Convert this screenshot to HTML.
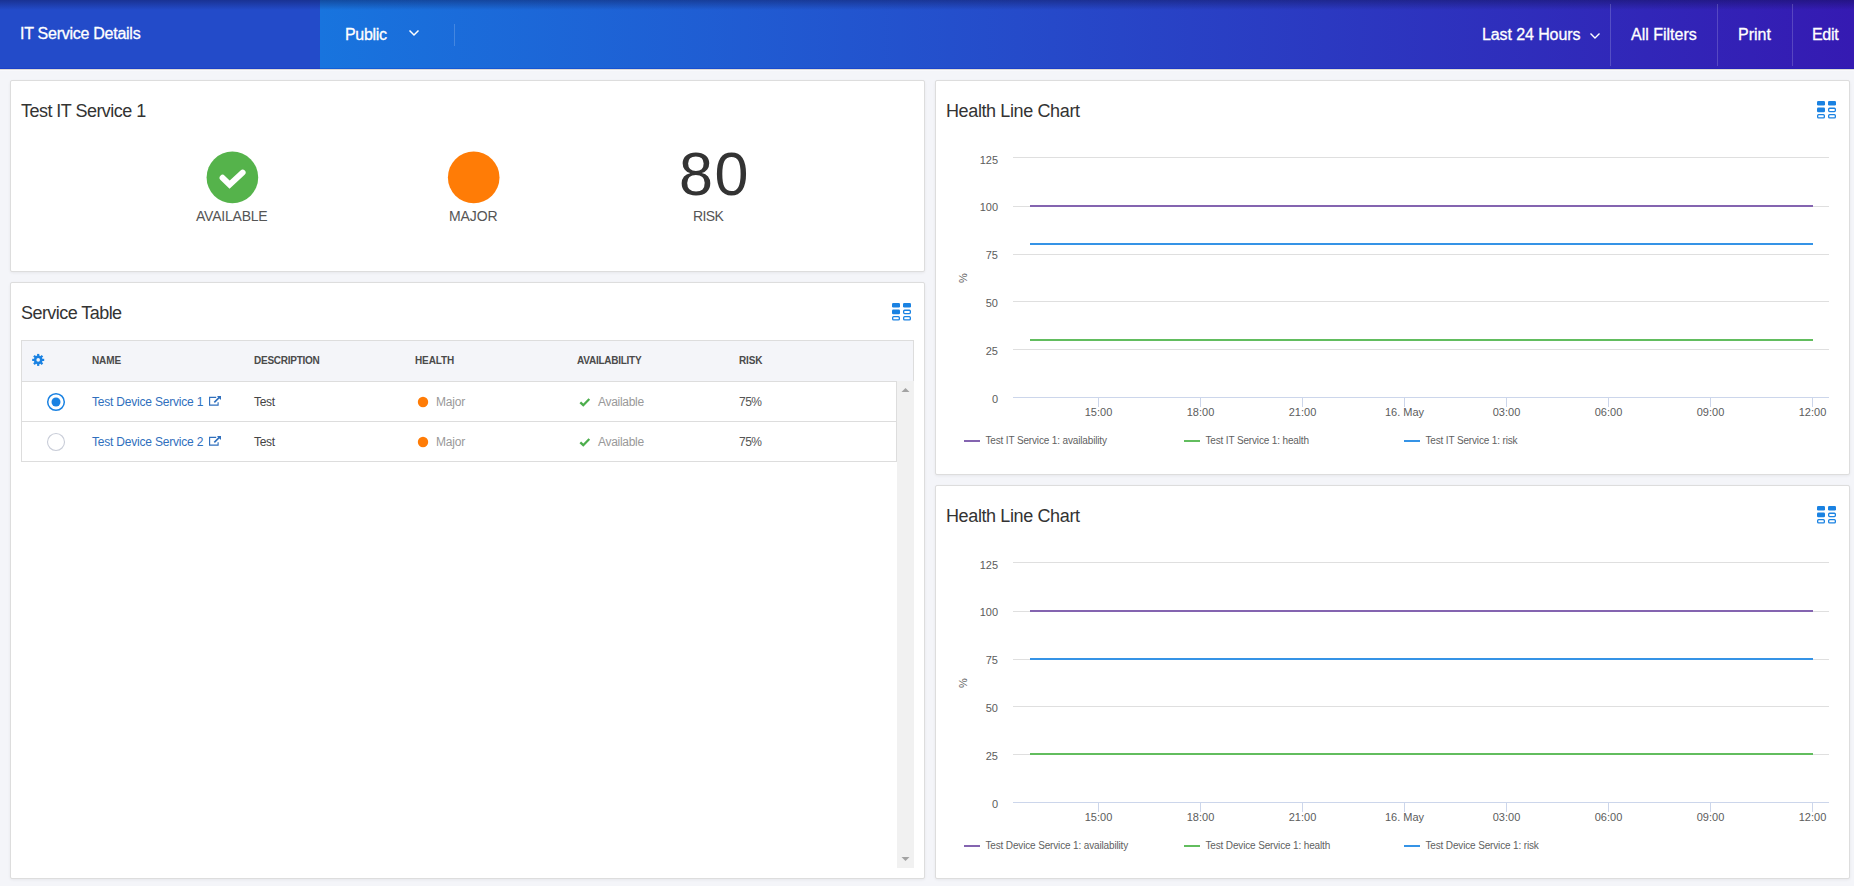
<!DOCTYPE html>
<html>
<head>
<meta charset="utf-8">
<style>
*{box-sizing:border-box;margin:0;padding:0}
html,body{width:1854px;height:886px;overflow:hidden;background:#f4f5f9;font-family:"Liberation Sans",sans-serif;position:relative}
.a{position:absolute;white-space:nowrap}
#hdrL{position:absolute;left:0;top:0;width:320px;height:69px;background:#234bc9}
#hdrR{position:absolute;left:320px;top:0;width:1534px;height:69px;background:linear-gradient(90deg,#1874de,#351ab2)}
#hdrShade{position:absolute;left:0;top:0;width:1854px;height:10px;background:linear-gradient(180deg,rgba(10,10,60,.38),rgba(10,10,60,0))}
.sep{position:absolute;top:4px;width:1px;height:62px;background:rgba(255,255,255,.18)}
.card{position:absolute;background:#fff;border:1px solid #dddddd;border-radius:2px;box-shadow:0 1px 3px rgba(0,0,0,.06)}
</style>
</head>
<body>
<div id="hdrL"></div>
<div id="hdrR"></div>
<div id="hdrShade"></div>
<div class="a" style="left:0;top:68px;width:1854px;height:1px;background:rgba(0,30,200,.25)"></div>
<div class="a" style="left:0;top:69px;width:1854px;height:1px;background:#dcd9d6"></div>
<div class="a" style="left:0;top:70px;width:1854px;height:1px;background:#f9f9fc"></div>
<div class="a" style="left:20px;top:26px;font-size:16px;line-height:16px;color:#fff;letter-spacing:-0.26px;font-weight:normal;-webkit-text-stroke:0.3px #fff">IT Service Details</div>
<div class="a" style="left:345px;top:27px;font-size:16px;line-height:16px;color:#fff;letter-spacing:-0.3px;font-weight:normal;-webkit-text-stroke:0.3px #fff">Public</div>
<svg class="a" style="left:407px;top:28px" width="14" height="10" viewBox="0 0 14 10"><path d="M2.5 2.5 L7 7 L11.5 2.5" fill="none" stroke="#fff" stroke-width="1.5"/></svg>
<div class="sep" style="left:454px;top:24px;height:22px"></div>
<div class="a" style="left:1482px;top:27px;font-size:16px;line-height:16px;color:#fff;letter-spacing:-0.1px;font-weight:normal;-webkit-text-stroke:0.3px #fff">Last 24 Hours</div>
<svg class="a" style="left:1588px;top:31px" width="14" height="10" viewBox="0 0 14 10"><path d="M2.5 2.5 L7 7 L11.5 2.5" fill="none" stroke="#fff" stroke-width="1.4"/></svg>
<div class="sep" style="left:1610px"></div>
<div class="a" style="left:1631px;top:27px;font-size:16px;line-height:16px;color:#fff;letter-spacing:0px;font-weight:normal;-webkit-text-stroke:0.3px #fff">All Filters</div>
<div class="sep" style="left:1717px"></div>
<div class="a" style="left:1738px;top:27px;font-size:16px;line-height:16px;color:#fff;letter-spacing:0px;font-weight:normal;-webkit-text-stroke:0.3px #fff">Print</div>
<div class="sep" style="left:1792px"></div>
<div class="a" style="left:1812px;top:27px;font-size:16px;line-height:16px;color:#fff;letter-spacing:-0.3px;font-weight:normal;-webkit-text-stroke:0.3px #fff">Edit</div>
<div class="card" style="left:10px;top:80px;width:915px;height:192px"></div>
<div class="a" style="left:21px;top:102px;font-size:18px;line-height:18px;color:#333;letter-spacing:-0.53px;font-weight:normal;">Test IT Service 1</div>
<svg class="a" style="left:206px;top:151px" width="53" height="53" viewBox="0 0 53 53"><circle cx="26.4" cy="26.4" r="25.8" fill="#55b34b"/><path d="M16.6 26.8 L23.6 33.6 L36.6 21.6" fill="none" stroke="#fff" stroke-width="6" stroke-linecap="round" stroke-linejoin="miter"/></svg>
<svg class="a" style="left:447px;top:151px" width="53" height="53" viewBox="0 0 53 53"><circle cx="26.7" cy="26.4" r="25.8" fill="#ff7c06"/></svg>
<div class="a" style="left:196px;top:209px;font-size:14px;line-height:14px;color:#555;letter-spacing:-0.22px;font-weight:normal;">AVAILABLE</div>
<div class="a" style="left:449px;top:209px;font-size:14px;line-height:14px;color:#555;letter-spacing:-0.1px;font-weight:normal;">MAJOR</div>
<div class="a" style="left:693px;top:209px;font-size:14px;line-height:14px;color:#555;letter-spacing:-0.6px;font-weight:normal;">RISK</div>
<div class="a" style="left:679px;top:144px;font-size:61px;line-height:61px;color:#333;letter-spacing:1.5px;font-weight:normal;">80</div>
<div class="card" style="left:10px;top:282px;width:915px;height:597px"></div>
<div class="a" style="left:21px;top:304px;font-size:18px;line-height:18px;color:#333;letter-spacing:-0.55px;font-weight:normal;">Service Table</div>
<svg class="a" style="left:891px;top:302px" width="21" height="20" viewBox="0 0 21 20">
 <g fill="#1a82e2"><rect x="1" y="1" width="8" height="4.6" rx="1.3"/><rect x="12" y="1" width="8" height="4.6" rx="1.3"/><rect x="1" y="7.6" width="8" height="4.6" rx="1.3"/></g>
 <g fill="none" stroke="#1a82e2" stroke-width="1.3"><rect x="12.65" y="8.25" width="6.7" height="3.3" rx="1"/><rect x="1.65" y="14.65" width="6.7" height="3.3" rx="1"/><rect x="12.65" y="14.65" width="6.7" height="3.3" rx="1"/></g>
</svg>
<div class="a" style="left:21px;top:340px;width:893px;height:41px;background:#f4f5f9;border:1px solid #dddddd;border-bottom:none"></div>
<div class="a" style="left:21px;top:381px;width:876px;height:81px;border:1px solid #dddddd"></div>
<div class="a" style="left:22px;top:421px;width:874px;height:1px;background:#dddddd"></div>
<div class="a" style="left:897px;top:381px;width:17px;height:487px;background:#f1f1f1"></div>
<svg class="a" style="left:900px;top:386px" width="11" height="8" viewBox="0 0 11 8"><path d="M1.5 6 L5.5 2 L9.5 6 Z" fill="#a3a3a3"/></svg>
<svg class="a" style="left:900px;top:855px" width="11" height="8" viewBox="0 0 11 8"><path d="M1.5 2 L5.5 6 L9.5 2 Z" fill="#a3a3a3"/></svg>
<svg class="a" style="left:31px;top:353px" width="14" height="14" viewBox="0 0 14 14"><g transform="translate(7.2 6.9)" fill="#1a82e2"><circle r="4.3"/><rect x="-1.1" y="-6" width="2.2" height="3" transform="rotate(0)"/><rect x="-1.1" y="-6" width="2.2" height="3" transform="rotate(45)"/><rect x="-1.1" y="-6" width="2.2" height="3" transform="rotate(90)"/><rect x="-1.1" y="-6" width="2.2" height="3" transform="rotate(135)"/><rect x="-1.1" y="-6" width="2.2" height="3" transform="rotate(180)"/><rect x="-1.1" y="-6" width="2.2" height="3" transform="rotate(225)"/><rect x="-1.1" y="-6" width="2.2" height="3" transform="rotate(270)"/><rect x="-1.1" y="-6" width="2.2" height="3" transform="rotate(315)"/><circle r="1.8" fill="#f4f5f9"/></g></svg>
<div class="a" style="left:92px;top:356px;font-size:10px;line-height:10px;color:#4a4a4a;letter-spacing:-0.1px;font-weight:bold;">NAME</div>
<div class="a" style="left:254px;top:356px;font-size:10px;line-height:10px;color:#4a4a4a;letter-spacing:-0.25px;font-weight:bold;">DESCRIPTION</div>
<div class="a" style="left:415px;top:356px;font-size:10px;line-height:10px;color:#4a4a4a;letter-spacing:-0.1px;font-weight:bold;">HEALTH</div>
<div class="a" style="left:577px;top:356px;font-size:10px;line-height:10px;color:#4a4a4a;letter-spacing:-0.25px;font-weight:bold;">AVAILABILITY</div>
<div class="a" style="left:739px;top:356px;font-size:10px;line-height:10px;color:#4a4a4a;letter-spacing:-0.1px;font-weight:bold;">RISK</div>
<svg class="a" style="left:46px;top:392px" width="20" height="20" viewBox="0 0 20 20"><circle cx="10" cy="10" r="8.3" fill="#fff" stroke="#1a82e2" stroke-width="1.5"/><circle cx="10" cy="10" r="4.5" fill="#1a82e2"/></svg>
<div class="a" style="left:92px;top:396px;font-size:12px;line-height:12px;color:#2f6fbd;letter-spacing:-0.2px;font-weight:normal;">Test Device Service 1</div>
<svg class="a" style="left:208px;top:390px" width="16" height="18" viewBox="0 0 16 18"><path d="M8.2 7.3 H1.6 V15.1 H10.1 V12.3" fill="none" stroke="#2f6fbd" stroke-width="1.15"/><path d="M6.3 12.4 L11.6 7.1" fill="none" stroke="#2f6fbd" stroke-width="1.6"/><path d="M8.9 6 H13 V10.1 Z" fill="#2f6fbd"/></svg>
<div class="a" style="left:254px;top:396px;font-size:12px;line-height:12px;color:#444;letter-spacing:-0.3px;font-weight:normal;">Test</div>
<svg class="a" style="left:417px;top:396px" width="12" height="12" viewBox="0 0 12 12"><circle cx="6" cy="6" r="5.2" fill="#ff7c06"/></svg>
<div class="a" style="left:436px;top:396px;font-size:12px;line-height:12px;color:#999;letter-spacing:-0.2px;font-weight:normal;">Major</div>
<svg class="a" style="left:578px;top:396px" width="14" height="12" viewBox="0 0 14 12"><path d="M2.3 6.3 L5.3 9.2 L11.3 3" fill="none" stroke="#4cae4c" stroke-width="2.3"/></svg>
<div class="a" style="left:598px;top:396px;font-size:12px;line-height:12px;color:#999;letter-spacing:-0.3px;font-weight:normal;">Available</div>
<div class="a" style="left:739px;top:396px;font-size:12px;line-height:12px;color:#555;letter-spacing:-0.5px;font-weight:normal;">75%</div>
<svg class="a" style="left:46px;top:432px" width="20" height="20" viewBox="0 0 20 20"><circle cx="10" cy="10" r="8.5" fill="#fff" stroke="#c9cdd8" stroke-width="1.1"/></svg>
<div class="a" style="left:92px;top:436px;font-size:12px;line-height:12px;color:#2f6fbd;letter-spacing:-0.2px;font-weight:normal;">Test Device Service 2</div>
<svg class="a" style="left:208px;top:430px" width="16" height="18" viewBox="0 0 16 18"><path d="M8.2 7.3 H1.6 V15.1 H10.1 V12.3" fill="none" stroke="#2f6fbd" stroke-width="1.15"/><path d="M6.3 12.4 L11.6 7.1" fill="none" stroke="#2f6fbd" stroke-width="1.6"/><path d="M8.9 6 H13 V10.1 Z" fill="#2f6fbd"/></svg>
<div class="a" style="left:254px;top:436px;font-size:12px;line-height:12px;color:#444;letter-spacing:-0.3px;font-weight:normal;">Test</div>
<svg class="a" style="left:417px;top:436px" width="12" height="12" viewBox="0 0 12 12"><circle cx="6" cy="6" r="5.2" fill="#ff7c06"/></svg>
<div class="a" style="left:436px;top:436px;font-size:12px;line-height:12px;color:#999;letter-spacing:-0.2px;font-weight:normal;">Major</div>
<svg class="a" style="left:578px;top:436px" width="14" height="12" viewBox="0 0 14 12"><path d="M2.3 6.3 L5.3 9.2 L11.3 3" fill="none" stroke="#4cae4c" stroke-width="2.3"/></svg>
<div class="a" style="left:598px;top:436px;font-size:12px;line-height:12px;color:#999;letter-spacing:-0.3px;font-weight:normal;">Available</div>
<div class="a" style="left:739px;top:436px;font-size:12px;line-height:12px;color:#555;letter-spacing:-0.5px;font-weight:normal;">75%</div>
<div class="card" style="left:935px;top:80px;width:915px;height:395px"></div>
<div class="a" style="left:946px;top:102px;font-size:18px;line-height:18px;color:#333;letter-spacing:-0.38px;font-weight:normal;">Health Line Chart</div>
<svg class="a" style="left:1816px;top:100px" width="21" height="20" viewBox="0 0 21 20">
 <g fill="#1a82e2"><rect x="1" y="1" width="8" height="4.6" rx="1.3"/><rect x="12" y="1" width="8" height="4.6" rx="1.3"/><rect x="1" y="7.6" width="8" height="4.6" rx="1.3"/></g>
 <g fill="none" stroke="#1a82e2" stroke-width="1.3"><rect x="12.65" y="8.25" width="6.7" height="3.3" rx="1"/><rect x="1.65" y="14.65" width="6.7" height="3.3" rx="1"/><rect x="12.65" y="14.65" width="6.7" height="3.3" rx="1"/></g>
</svg>
<svg class="a" style="left:936px;top:130px" width="913" height="340" viewBox="936 130 913 340" font-family="Liberation Sans, sans-serif"><path d="M1013 157.5 H1829" stroke="#dfdfdf" stroke-width="1"/><path d="M1013 206.5 H1829" stroke="#dfdfdf" stroke-width="1"/><path d="M1013 254.5 H1829" stroke="#dfdfdf" stroke-width="1"/><path d="M1013 301.5 H1829" stroke="#dfdfdf" stroke-width="1"/><path d="M1013 349.5 H1829" stroke="#dfdfdf" stroke-width="1"/><path d="M1013 397.5 H1829" stroke="#ccd6eb" stroke-width="1"/><path d="M1098.5 397.5 V407" stroke="#ccd6eb" stroke-width="1"/><path d="M1200.5 397.5 V407" stroke="#ccd6eb" stroke-width="1"/><path d="M1302.5 397.5 V407" stroke="#ccd6eb" stroke-width="1"/><path d="M1404.5 397.5 V407" stroke="#ccd6eb" stroke-width="1"/><path d="M1506.5 397.5 V407" stroke="#ccd6eb" stroke-width="1"/><path d="M1608.5 397.5 V407" stroke="#ccd6eb" stroke-width="1"/><path d="M1710.5 397.5 V407" stroke="#ccd6eb" stroke-width="1"/><path d="M1812.5 397.5 V407" stroke="#ccd6eb" stroke-width="1"/><text x="998" y="164" text-anchor="end" font-size="11" fill="#5c5c5c">125</text><text x="998" y="211" text-anchor="end" font-size="11" fill="#5c5c5c">100</text><text x="998" y="259" text-anchor="end" font-size="11" fill="#5c5c5c">75</text><text x="998" y="307" text-anchor="end" font-size="11" fill="#5c5c5c">50</text><text x="998" y="355" text-anchor="end" font-size="11" fill="#5c5c5c">25</text><text x="998" y="403" text-anchor="end" font-size="11" fill="#5c5c5c">0</text><text x="1098.5" y="416" text-anchor="middle" font-size="11" fill="#5c5c5c">15:00</text><text x="1200.5" y="416" text-anchor="middle" font-size="11" fill="#5c5c5c">18:00</text><text x="1302.5" y="416" text-anchor="middle" font-size="11" fill="#5c5c5c">21:00</text><text x="1404.5" y="416" text-anchor="middle" font-size="11" fill="#5c5c5c">16. May</text><text x="1506.5" y="416" text-anchor="middle" font-size="11" fill="#5c5c5c">03:00</text><text x="1608.5" y="416" text-anchor="middle" font-size="11" fill="#5c5c5c">06:00</text><text x="1710.5" y="416" text-anchor="middle" font-size="11" fill="#5c5c5c">09:00</text><text x="1812.5" y="416" text-anchor="middle" font-size="11" fill="#5c5c5c">12:00</text><text transform="translate(967 278) rotate(-90)" text-anchor="middle" font-size="11" fill="#5c5c5c">%</text><path d="M1030 206 H1813" stroke="#8464b0" stroke-width="2"/><path d="M1030 340 H1813" stroke="#62bd5e" stroke-width="2"/><path d="M1030 244 H1813" stroke="#3593e6" stroke-width="2"/><path d="M964 441 H980" stroke="#8464b0" stroke-width="2"/><text x="985.5" y="444" font-size="10" fill="#5f5f5f" letter-spacing="-0.15">Test IT Service 1: availability</text><path d="M1184 441 H1200" stroke="#62bd5e" stroke-width="2"/><text x="1205.5" y="444" font-size="10" fill="#5f5f5f" letter-spacing="-0.15">Test IT Service 1: health</text><path d="M1404 441 H1420" stroke="#3593e6" stroke-width="2"/><text x="1425.5" y="444" font-size="10" fill="#5f5f5f" letter-spacing="-0.15">Test IT Service 1: risk</text></svg>
<div class="card" style="left:935px;top:485px;width:915px;height:394px"></div>
<div class="a" style="left:946px;top:507px;font-size:18px;line-height:18px;color:#333;letter-spacing:-0.38px;font-weight:normal;">Health Line Chart</div>
<svg class="a" style="left:1816px;top:505px" width="21" height="20" viewBox="0 0 21 20">
 <g fill="#1a82e2"><rect x="1" y="1" width="8" height="4.6" rx="1.3"/><rect x="12" y="1" width="8" height="4.6" rx="1.3"/><rect x="1" y="7.6" width="8" height="4.6" rx="1.3"/></g>
 <g fill="none" stroke="#1a82e2" stroke-width="1.3"><rect x="12.65" y="8.25" width="6.7" height="3.3" rx="1"/><rect x="1.65" y="14.65" width="6.7" height="3.3" rx="1"/><rect x="12.65" y="14.65" width="6.7" height="3.3" rx="1"/></g>
</svg>
<svg class="a" style="left:936px;top:535px" width="913" height="340" viewBox="936 130 913 340" font-family="Liberation Sans, sans-serif"><path d="M1013 157.5 H1829" stroke="#dfdfdf" stroke-width="1"/><path d="M1013 206.5 H1829" stroke="#dfdfdf" stroke-width="1"/><path d="M1013 254.5 H1829" stroke="#dfdfdf" stroke-width="1"/><path d="M1013 301.5 H1829" stroke="#dfdfdf" stroke-width="1"/><path d="M1013 349.5 H1829" stroke="#dfdfdf" stroke-width="1"/><path d="M1013 397.5 H1829" stroke="#ccd6eb" stroke-width="1"/><path d="M1098.5 397.5 V407" stroke="#ccd6eb" stroke-width="1"/><path d="M1200.5 397.5 V407" stroke="#ccd6eb" stroke-width="1"/><path d="M1302.5 397.5 V407" stroke="#ccd6eb" stroke-width="1"/><path d="M1404.5 397.5 V407" stroke="#ccd6eb" stroke-width="1"/><path d="M1506.5 397.5 V407" stroke="#ccd6eb" stroke-width="1"/><path d="M1608.5 397.5 V407" stroke="#ccd6eb" stroke-width="1"/><path d="M1710.5 397.5 V407" stroke="#ccd6eb" stroke-width="1"/><path d="M1812.5 397.5 V407" stroke="#ccd6eb" stroke-width="1"/><text x="998" y="164" text-anchor="end" font-size="11" fill="#5c5c5c">125</text><text x="998" y="211" text-anchor="end" font-size="11" fill="#5c5c5c">100</text><text x="998" y="259" text-anchor="end" font-size="11" fill="#5c5c5c">75</text><text x="998" y="307" text-anchor="end" font-size="11" fill="#5c5c5c">50</text><text x="998" y="355" text-anchor="end" font-size="11" fill="#5c5c5c">25</text><text x="998" y="403" text-anchor="end" font-size="11" fill="#5c5c5c">0</text><text x="1098.5" y="416" text-anchor="middle" font-size="11" fill="#5c5c5c">15:00</text><text x="1200.5" y="416" text-anchor="middle" font-size="11" fill="#5c5c5c">18:00</text><text x="1302.5" y="416" text-anchor="middle" font-size="11" fill="#5c5c5c">21:00</text><text x="1404.5" y="416" text-anchor="middle" font-size="11" fill="#5c5c5c">16. May</text><text x="1506.5" y="416" text-anchor="middle" font-size="11" fill="#5c5c5c">03:00</text><text x="1608.5" y="416" text-anchor="middle" font-size="11" fill="#5c5c5c">06:00</text><text x="1710.5" y="416" text-anchor="middle" font-size="11" fill="#5c5c5c">09:00</text><text x="1812.5" y="416" text-anchor="middle" font-size="11" fill="#5c5c5c">12:00</text><text transform="translate(967 278) rotate(-90)" text-anchor="middle" font-size="11" fill="#5c5c5c">%</text><path d="M1030 206 H1813" stroke="#8464b0" stroke-width="2"/><path d="M1030 349 H1813" stroke="#62bd5e" stroke-width="2"/><path d="M1030 254 H1813" stroke="#3593e6" stroke-width="2"/><path d="M964 441 H980" stroke="#8464b0" stroke-width="2"/><text x="985.5" y="444" font-size="10" fill="#5f5f5f" letter-spacing="-0.15">Test Device Service 1: availability</text><path d="M1184 441 H1200" stroke="#62bd5e" stroke-width="2"/><text x="1205.5" y="444" font-size="10" fill="#5f5f5f" letter-spacing="-0.15">Test Device Service 1: health</text><path d="M1404 441 H1420" stroke="#3593e6" stroke-width="2"/><text x="1425.5" y="444" font-size="10" fill="#5f5f5f" letter-spacing="-0.15">Test Device Service 1: risk</text></svg>
</body>
</html>
